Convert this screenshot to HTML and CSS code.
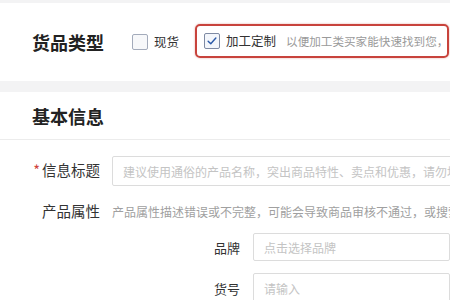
FILE: index.html
```html
<!DOCTYPE html>
<html lang="zh">
<head>
<meta charset="utf-8">
<link rel="stylesheet" href="styles.css">
</head>
<body>
<div class="page">
  <section class="panel type-panel">
    <h2 class="title">货品类型</h2>
    <label class="opt">
      <span class="box"></span>
      <span class="opt-text">现货</span>
    </label>
    <div class="highlight">
      <span class="box checked">
        <svg viewBox="0 0 16 16" width="16" height="16"><path d="M3.6 8.2 L6.6 11.2 L12.4 4.6" fill="none" stroke="#2c5aa8" stroke-width="1.6" stroke-linecap="round" stroke-linejoin="round"/></svg>
      </span>
      <span class="opt-text">加工定制</span>
      <span class="hint">以便加工类买家能快速找到您，提高曝光</span>
    </div>
  </section>

  <section class="panel info-panel">
    <div class="info-head">
      <h2 class="title">基本信息</h2>
    </div>
    <div class="form">
      <div class="row">
        <div class="label"><span class="req">*</span>信息标题</div>
        <div class="input tall">建议使用通俗的产品名称，突出商品特性、卖点和优惠，请勿堆砌关键词</div>
      </div>
      <div class="row attr-row">
        <div class="label">产品属性</div>
        <div class="attr-hint">产品属性描述错误或不完整，可能会导致商品审核不通过，或搜索不到</div>
      </div>
      <div class="sub-row brand-row">
        <div class="sub-label">品牌</div>
        <div class="input short">点击选择品牌</div>
      </div>
      <div class="sub-row code-row">
        <div class="sub-label">货号</div>
        <div class="input tall">请输入</div>
      </div>
    </div>
  </section>
</div>
</body>
</html>
```
FILE: styles.css
```css
html, body {
  margin: 0;
  padding: 0;
  overflow: hidden;
}
body {
  background: #f3f3f4;
  font-family: "Noto Sans CJK SC", "Noto Sans", sans-serif;
  color: #333;
  width: 450px;
  height: 300px;
}
.page {
  padding-top: 3px;
}
.panel {
  background: #fff;
}
.type-panel {
  height: 78px;
  display: flex;
  align-items: center;
  padding-left: 32px;
  white-space: nowrap;
}
.title {
  margin: 0;
  font-size: 18px;
  font-weight: bold;
  color: #222;
  line-height: 24px;
}
.opt {
  display: flex;
  align-items: center;
  margin-left: 28px;
}
.box {
  width: 14px;
  height: 14px;
  border: 1px solid #a3abbb;
  border-radius: 2px;
  background: #f7f8fa;
  display: inline-flex;
  align-items: center;
  justify-content: center;
  flex: none;
}
.box.checked {
  border-color: #7e8aa3;
  background: #f3f6fb;
}
.box svg {
  width: 14px;
  height: 14px;
}
.opt-text {
  font-size: 12.5px;
  color: #333;
  margin-left: 6px;
  line-height: 16px;
}
.highlight {
  margin-left: 16px;
  width: 236px;
  height: 30px;
  border: 2px solid #c8433c;
  border-radius: 5px;
  box-shadow: 0 0 2px rgba(200, 67, 60, 0.5);
  display: flex;
  align-items: center;
  padding-left: 7px;
  padding-right: 7px;
  overflow: hidden;
  margin-top: -2px;
}
.hint {
  margin-left: 10px;
  font-size: 11.6px;
  color: #9a9a9a;
  white-space: nowrap;
}
.info-panel {
  margin-top: 11px;
  height: 300px;
}
.info-head {
  height: 47px;
  border-bottom: 1px solid #ececec;
  display: flex;
  align-items: center;
  padding-left: 32px;
}
.form {
  padding-top: 16px;
  white-space: nowrap;
}
.row {
  display: grid;
  grid-template-columns: 100px 1fr;
  column-gap: 12px;
  align-items: center;
}
.label {
  text-align: right;
  font-size: 14.5px;
  color: #333;
  line-height: 20px;
}
.row:first-child .label {
  margin-top: -3px;
}
.req {
  color: #d0453c;
  margin-right: 2px;
}
.input {
  border: 1px solid #dcdcdc;
  border-radius: 2px;
  box-sizing: border-box;
  width: 400px;
  padding-left: 10px;
  font-size: 12px;
  color: #c4c4c4;
  display: flex;
  align-items: center;
  overflow: hidden;
}
.input.tall {
  height: 30px;
}
.input.short {
  height: 28px;
}
.attr-row {
  margin-top: 15px;
}
.attr-hint {
  font-size: 12px;
  color: #a0a0a0;
  overflow: hidden;
}
.sub-row {
  display: flex;
  align-items: center;
  margin-left: 112px;
}
.brand-row {
  margin-top: 12px;
}
.code-row {
  margin-top: 12px;
}
.sub-label {
  width: 128px;
  text-align: right;
  font-size: 13px;
  color: #333;
  margin-right: 13px;
  flex: none;
}
```
